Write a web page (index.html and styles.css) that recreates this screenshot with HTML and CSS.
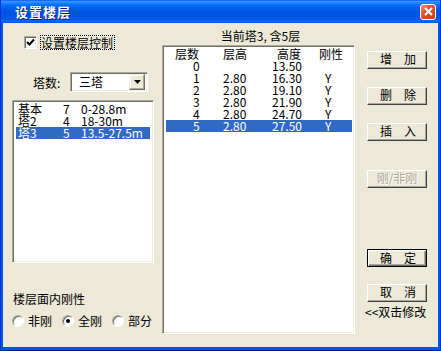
FILE: index.html
```html
<!DOCTYPE html>
<html lang="zh-CN">

<head>
    <meta charset="UTF-8" />
    <title>设置楼层</title>
    <link rel="stylesheet" href="styles.css">
</head>

<body>
    <div class="window">
        <div class="titlebar">
            <span class="title">设置楼层</span>
            <span class="close">
                <svg width="9" height="9" viewBox="0 0 9 9"><path d="M1 1 L8 8 M8 1 L1 8" stroke="#fff" stroke-width="2" /></svg>
            </span>
        </div>
        <div class="client">
            <!-- 左边：塔 -->
            <div class="left">
                <div class="chk-row">
                    <span class="checkbox">
                        <svg width="9" height="9" viewBox="0 0 9 9"><path d="M1 4 L3.5 6.5 L8 1.5" fill="none" stroke="#000" stroke-width="2" /></svg>
                    </span>
                    <span class="focus">设置楼层控制</span>
                </div>
                <div class="combo-row">
                    <span class="combo-label">塔数:</span>
                    <div class="combo">
                        <span class="combo-text">三塔</span>
                        <span class="combo-btn">
                            <svg width="7" height="4" viewBox="0 0 7 4"><path d="M0 0 H7 L3.5 4 Z" fill="#000" /></svg>
                        </span>
                    </div>
                </div>
                <div class="listbox towers">
                    <div class="trow"><span class="t1">基本</span><span class="t2">7</span><span>0-28.8m</span></div>
                    <div class="trow"><span class="t1">塔2</span><span class="t2">4</span><span>18-30m</span></div>
                    <div class="trow sel"><span class="t1">塔3</span><span class="t2">5</span><span>13.5-27.5m</span></div>
                </div>
                <div class="group-label">楼层面内刚性</div>
                <div class="radio-row">
                    <span class="radio"></span><span class="rtext">非刚</span>
                    <span class="radio on"></span><span class="rtext">全刚</span>
                    <span class="radio"></span><span class="rtext">部分</span>
                </div>
            </div>

            <!-- 中间：楼层表 -->
            <div class="mid">
                <div class="mid-head">当前塔3, 含5层</div>
                <div class="listbox floors">
                    <div class="frow"><span class="c1">层数</span><span class="c2">层高</span><span class="c3 h">高度</span><span class="c4">刚性</span></div>
                    <div class="frow"><span class="c1 n">0</span><span class="c2"></span><span class="c3">13.50</span><span class="c4"></span></div>
                    <div class="frow"><span class="c1 n">1</span><span class="c2">2.80</span><span class="c3">16.30</span><span class="c4 y">Y</span></div>
                    <div class="frow"><span class="c1 n">2</span><span class="c2">2.80</span><span class="c3">19.10</span><span class="c4 y">Y</span></div>
                    <div class="frow"><span class="c1 n">3</span><span class="c2">2.80</span><span class="c3">21.90</span><span class="c4 y">Y</span></div>
                    <div class="frow"><span class="c1 n">4</span><span class="c2">2.80</span><span class="c3">24.70</span><span class="c4 y">Y</span></div>
                    <div class="frow sel"><span class="c1 n">5</span><span class="c2">2.80</span><span class="c3">27.50</span><span class="c4 y">Y</span></div>
                </div>
            </div>

            <!-- 右边：按钮 -->
            <div class="right">
                <div class="btn wide b-add">增加</div>
                <div class="btn wide b-del">删除</div>
                <div class="btn wide b-ins">插入</div>
                <div class="btn b-rig disabled">刚/非刚</div>
                <div class="btn wide b-ok default">确定</div>
                <div class="btn wide b-cancel">取消</div>
                <div class="hint">&lt;&lt;双击修改</div>
            </div>
        </div>
    </div>
</body>

</html>
```

FILE: styles.css
```css
* {
    font-family: "Noto Sans CJK SC", "Noto Sans", sans-serif;
    box-sizing: border-box;
}

body {
    margin: 0;
    padding: 0;
    background: #fff;
}

.window {
    width: 441px;
    height: 351px;
    display: flex;
    flex-direction: column;
    background: #0055e5;
    border-left: 1px solid #0831d9;
    border-right: 1px solid #0831d9;
    border-bottom: 1px solid #001ea0;
    font-size: 12px;
    color: #000;
}

/* 标题栏 */
.titlebar {
    height: 23px;
    display: flex;
    align-items: center;
    padding-left: 14px;
    padding-right: 4px;
    background: linear-gradient(to bottom, #0058ee 0%, #3a93ff 6%, #288eff 10%, #127dff 16%, #036ffc 22%, #0262ee 32%, #0057e5 45%, #0054e3 60%, #0055eb 75%, #005bf5 85%, #026afe 92%, #0055e5 100%);
}

.title {
    flex: 1;
    color: #fff;
    font-weight: bold;
    font-size: 13px;
    letter-spacing: 1px;
    text-shadow: 1px 1px 0 #0a1e8a;
    line-height: 14px;
}

.close {
    width: 16px;
    height: 16px;
    border: 1px solid #fff;
    border-radius: 3px;
    background: linear-gradient(135deg, #f0936e 0%, #e2542a 40%, #c83b10 100%);
    display: flex;
    align-items: center;
    justify-content: center;
}

/* 客户区 */
.client {
    flex: 1;
    margin: 0 2px 3px 2px;
    background: #ece9d8;
    display: flex;
    padding-left: 9px;
}

.left {
    width: 142px;
    flex-shrink: 0;
    display: flex;
    flex-direction: column;
}

.chk-row {
    margin-top: 12px;
    padding-left: 12px;
    height: 15px;
    display: flex;
    align-items: center;
}

.checkbox {
    width: 13px;
    height: 13px;
    background: #fff;
    border: 1px solid;
    border-color: #aca899 #fff #fff #aca899;
    box-shadow: inset 1px 1px 0 #716f64, inset -1px -1px 0 #f1efe2;
    display: flex;
    align-items: center;
    justify-content: center;
}

.focus {
    margin-left: 3px;
    border: 1px dotted #000;
    line-height: 13px;
    padding: 0 1px 0 0;
}

.combo-row {
    margin-top: 22px;
    height: 20px;
    display: flex;
    align-items: center;
}

.combo-label {
    margin-left: 21px;
    width: 37px;
    padding-top: 1px;
}

.combo {
    width: 78px;
    height: 20px;
    background: #fff;
    border: 1px solid;
    border-color: #aca899 #fff #fff #aca899;
    box-shadow: inset 1px 1px 0 #716f64, inset -1px -1px 0 #f1efe2;
    display: flex;
    align-items: center;
    padding: 2px;
}

.combo-text {
    flex: 1;
    padding-left: 6px;
    line-height: 14px;
}

.combo-btn {
    width: 16px;
    height: 16px;
    background: #ece9d8;
    border: 1px solid;
    border-color: #f1efe2 #716f64 #716f64 #f1efe2;
    box-shadow: inset -1px -1px 0 #aca899, inset 1px 1px 0 #fff;
    display: flex;
    align-items: center;
    justify-content: center;
}

.listbox {
    background: #fff;
    border: 1px solid;
    border-color: #aca899 #fff #fff #aca899;
    box-shadow: inset 1px 1px 0 #716f64, inset -1px -1px 0 #f1efe2;
}

.towers {
    margin-top: 8px;
    height: 163px;
    padding: 2px 3px;
}

.trow {
    display: flex;
    height: 12px;
    line-height: 12px;
    padding-left: 2px;
    white-space: nowrap;
}

.t1 {
    width: 45px;
}

.t2 {
    width: 18px;
}

.sel {
    background: #316ac5;
    color: #fff;
}

.group-label {
    margin-top: 29px;
    margin-left: 1px;
    line-height: 14px;
}

.radio-row {
    margin-top: 8px;
    height: 13px;
    display: flex;
    align-items: center;
    white-space: nowrap;
}

.radio {
    flex-shrink: 0;
    width: 12px;
    height: 12px;
    border-radius: 50%;
    background: #fff;
    border: 1px solid;
    border-color: #aca899 #fff #fff #aca899;
    box-shadow: inset 1px 1px 0 #716f64;
    display: flex;
    align-items: center;
    justify-content: center;
}

.radio.on::after {
    content: "";
    width: 4px;
    height: 4px;
    border-radius: 50%;
    background: #000;
}

.rtext {
    flex-shrink: 0;
    margin-left: 4px;
    margin-right: 10px;
    line-height: 13px;
}

/* 楼层表 */
.mid {
    width: 193px;
    flex-shrink: 0;
    margin-left: 8px;
    display: flex;
    flex-direction: column;
}

.mid-head {
    margin-top: 6px;
    height: 14px;
    line-height: 14px;
    text-align: center;
    padding-left: 4px;
}

.floors {
    margin-top: 2px;
    height: 289px;
    padding: 2px 2px;
}

.frow {
    display: flex;
    height: 12px;
    line-height: 12px;
    margin-left: 1px;
    white-space: nowrap;
}

.c1 {
    width: 57px;
    padding-left: 9px;
}

.c1.n {
    padding-left: 27px;
}

.c2 {
    width: 49px;
}

.c3 {
    width: 47px;
}

.c3.h {
    padding-left: 5px;
}

.c4 {
    flex: 1;
}

.c4.y {
    padding-left: 6px;
}

/* 按钮 */
.right {
    width: 61px;
    flex-shrink: 0;
    margin-left: 12px;
    display: flex;
    flex-direction: column;
}

.btn {
    height: 18px;
    width: 60px;
    line-height: 14px;
    text-align: center;
    background: #ece9d8;
    border: 1px solid;
    border-color: #fff #404040 #404040 #fff;
    box-shadow: inset -1px -1px 0 #aca899;
    white-space: nowrap;
}

.btn.wide {
    letter-spacing: 12px;
    padding-left: 12px;
}

.btn.default {
    border: 1px solid #000;
    box-shadow: inset 1px 1px 0 #fff, inset -1px -1px 0 #716f64, inset -2px -2px 0 #aca899;
    padding-top: 1px;
}

.btn.disabled {
    color: #aca899;
    text-shadow: 1px 1px 0 #fff;
}

.b-add {
    margin-top: 28px;
}

.b-del {
    margin-top: 18px;
}

.b-ins {
    margin-top: 18px;
}

.b-rig {
    margin-top: 29px;
}

.b-ok {
    margin-top: 61px;
}

.b-cancel {
    margin-top: 17px;
}

.hint {
    margin-top: 3px;
    margin-left: -2px;
    line-height: 14px;
    white-space: nowrap;
}
```
